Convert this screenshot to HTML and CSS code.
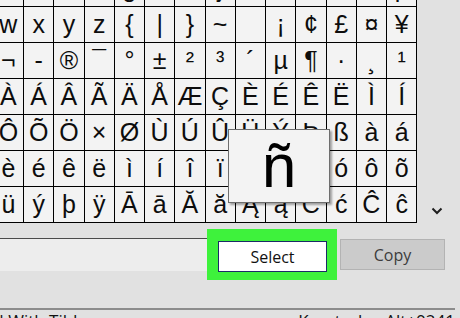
FILE: index.html
```html
<!DOCTYPE html>
<html>
<head>
<meta charset="utf-8">
<link rel="stylesheet" href="styles.css">
</head>
<body>
<div class="main">
  <div class="gridwrap">
    <div class="grid">
      <div>c</div><div>d</div><div>e</div><div>f</div><div>g</div><div>h</div><div>i</div><div>j</div><div>k</div><div>l</div><div>m</div><div>n</div><div>o</div><div>p</div>
      <div>w</div><div>x</div><div>y</div><div>z</div><div>{</div><div>|</div><div>}</div><div>~</div><div>&nbsp;</div><div>¡</div><div>¢</div><div>£</div><div>¤</div><div>¥</div>
      <div>¬</div><div>-</div><div>®</div><div>¯</div><div>°</div><div>±</div><div>²</div><div>³</div><div>´</div><div>µ</div><div>¶</div><div>·</div><div>¸</div><div>¹</div>
      <div>À</div><div>Á</div><div>Â</div><div>Ã</div><div>Ä</div><div>Å</div><div>Æ</div><div>Ç</div><div>È</div><div>É</div><div>Ê</div><div>Ë</div><div>Ì</div><div>Í</div>
      <div>Ô</div><div>Õ</div><div>Ö</div><div>×</div><div>Ø</div><div>Ù</div><div>Ú</div><div>Û</div><div>Ü</div><div>Ý</div><div>Þ</div><div>ß</div><div>à</div><div>á</div>
      <div>è</div><div>é</div><div>ê</div><div>ë</div><div>ì</div><div>í</div><div>î</div><div>ï</div><div>ð</div><div>ñ</div><div>ò</div><div>ó</div><div>ô</div><div>õ</div>
      <div>ü</div><div>ý</div><div>þ</div><div>ÿ</div><div>Ā</div><div>ā</div><div>Ă</div><div>ă</div><div>Ą</div><div>ą</div><div>Ć</div><div>ć</div><div>Ĉ</div><div>ĉ</div>
    </div>
  </div>
  <div class="scroll">
    <svg class="chev" width="12" height="8" viewBox="0 0 12 8"><path d="M1.5 1.5 L6 6 L10.5 1.5" fill="none" stroke="#1e1e1e" stroke-width="2"/></svg>
  </div>
</div>
<div class="controls">
  <div class="field"></div>
  <div class="hl"><button class="btn select">Select</button></div>
  <button class="btn copy">Copy</button>
</div>
<div class="status">
  <span class="left">N With Tilde</span>
  <span class="right">Keystroke: Alt+0241</span>
</div>
<div class="popup">ñ</div>
</body>
</html>
```
FILE: styles.css
```css
html, body {
  margin: 0;
  padding: 0;
}
body {
  width: 460px;
  height: 318px;
  overflow: hidden;
  background: #e1e1e1;
  position: relative;
  font-family: "Liberation Sans", Arial, sans-serif;
}
.main {
  display: flex;
  height: 223px;
}
.gridwrap {
  width: 418px;
  height: 223px;
  overflow: hidden;
  flex: none;
}
.grid {
  display: grid;
  grid-template-columns: repeat(14, 29.25px);
  grid-template-rows: repeat(7, 35px);
  gap: 1px;
  background: #000;
  padding: 0 1px 1px 0;
  width: max-content;
  margin: -29px 0 0 -6.25px;
}
.grid div {
  background: #f3f3f3;
  display: flex;
  align-items: center;
  justify-content: center;
  font-size: 25px;
  color: #0d0d0d;
  line-height: 1;
}
.scroll {
  flex: 1;
  display: flex;
  align-items: flex-end;
  justify-content: center;
  padding-bottom: 8px;
  padding-right: 4px;
}
.controls {
  display: flex;
  align-items: center;
  margin-top: 6px;
  height: 51px;
}
.field {
  width: 207px;
  height: 32px;
  border-top: 1px solid #4a4a4a;
  background: #ededed;
  flex: none;
}
.hl {
  background: #3ef23c;
  padding: 12px 10px 8px 11px;
  flex: none;
}
.btn {
  font-family: "Open Sans", "Noto Sans", sans-serif;
  font-size: 16px;
  display: flex;
  align-items: center;
  justify-content: center;
  padding: 0;
  margin: 0;
}
.select {
  width: 109px;
  height: 31px;
  background: #ffffff;
  border: 1px solid #1b2b66;
  color: #111;
}
.copy {
  margin-left: 3px;
  width: 105px;
  height: 31px;
  background: #cbcbcb;
  border: 1px solid #b3b3b3;
  color: #3d3d3d;
}
.status {
  margin-top: 28px;
  margin-right: 5px;
  border-top: 2px solid #8c8c8c;
  display: flex;
  justify-content: space-between;
  font-family: "Open Sans", "Noto Sans", sans-serif;
  font-size: 17px;
  line-height: 1;
  padding-top: 2px;
  color: #111;
}
.left {
  margin-left: -9px;
}
.popup {
  position: absolute;
  left: 228px;
  top: 129px;
  width: 100px;
  height: 72px;
  background: #f3f3f3;
  border: 1px solid #6e6e6e;
  box-shadow: 2px 2px 2px rgba(0, 0, 0, 0.35);
  display: flex;
  align-items: center;
  justify-content: center;
  font-size: 62px;
  color: #000;
  line-height: 1;
}
```
